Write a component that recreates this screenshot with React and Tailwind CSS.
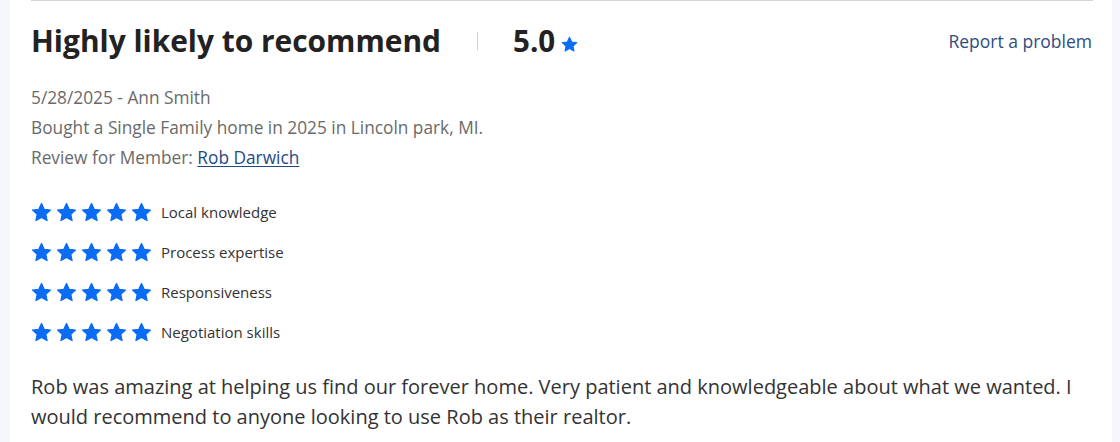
import React from "react";

const Star = ({ className }) => (
  <svg viewBox="0 0 24 24" className={className} fill="#0a6cf5">
    <path d="M12 1.8l3.05 6.55 7.15.85-5.28 4.92 1.4 7.08L12 17.65 5.68 21.2l1.4-7.08L1.8 9.2l7.15-.85z" strokeLinejoin="round" stroke="#0a6cf5" strokeWidth="1.5" />
  </svg>
);

const ratings = ["Local knowledge", "Process expertise", "Responsiveness", "Negotiation skills"];

export default function App() {
  return (
    <div className="flex w-[1120px] h-[442px] bg-[#f6f7fa] overflow-hidden" style={{ fontFamily: '"Open Sans", sans-serif' }}>
      <div className="ml-[10px] w-[1102px] bg-white px-[21px]">
        <div className="border-t border-[#d4d4d4] w-[1062px]" />
        <div className="flex items-center justify-between h-[80px]">
          <div className="flex items-center">
            <h1 className="text-[29.9px] font-bold text-[#222]">Highly likely to recommend</h1>
            <div className="ml-[36px] w-[1px] h-[18px] bg-[#d0d0d0]" />
            <span className="ml-[35px] text-[29.5px] font-bold text-[#222]">5.0</span>
            <Star className="ml-[6px] mt-[8px] w-[17px] h-[17px]" />
          </div>
          <a className="text-[17.5px] text-[#2f4d7e] mt-[1px] mr-[-1px]">Report a problem</a>
        </div>
        <div className="text-[17.3px] text-[#6a6a6a] leading-[30px] mt-[2px]">
          <div>5/28/2025 - Ann Smith</div>
          <div>Bought a Single Family home in 2025 in Lincoln park, MI.</div>
          <div>
            Review for Member: <a className="text-[#1f4a85] underline underline-offset-2">Rob Darwich</a>
          </div>
        </div>
        <div className="mt-[29px] flex flex-col gap-[19px]">
          {ratings.map((r) => (
            <div key={r} className="flex items-center h-[21px]">
              <div className="flex gap-[4px]">
                {[0, 1, 2, 3, 4].map((i) => (
                  <Star key={i} className="w-[21px] h-[21px]" />
                ))}
              </div>
              <span className="ml-[9px] text-[15px] text-[#333]">{r}</span>
            </div>
          ))}
        </div>
        <p className="mt-[29px] text-[20px] leading-[30px] text-[#333] w-[1066px]">
          Rob was amazing at helping us find our forever home. Very patient and knowledgeable about what we wanted. I would recommend to anyone looking to use Rob as their realtor.
        </p>
      </div>
    </div>
  );
}
